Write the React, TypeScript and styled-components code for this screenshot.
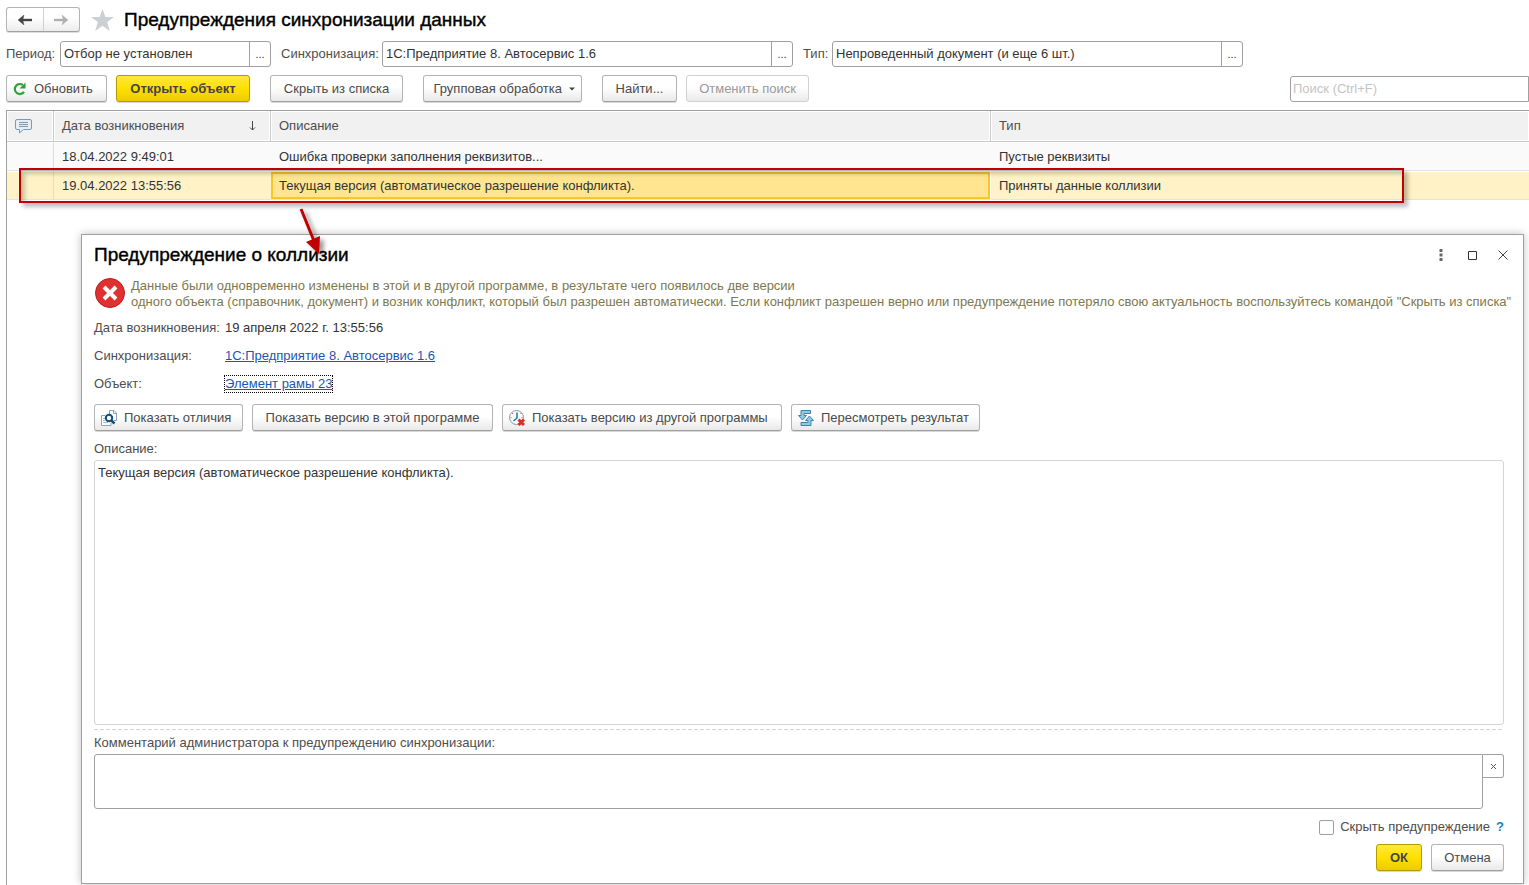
import React from "react";
import styled, { createGlobalStyle, css } from "styled-components";

const GlobalStyle = createGlobalStyle`
  *, *::before, *::after { box-sizing: border-box; }
  html, body, #root { height: 100%; }
  body {
    margin: 0;
    background: #fff;
    color: #333;
    font: 13px/16px "Liberation Sans", Arial, sans-serif;
  }
  button, input, textarea { font: inherit; color: inherit; margin: 0; }
  svg { display: block; flex-shrink: 0; }
`;

const line = "#a0a0a0";

const Page = styled.div`
  position: relative;
  display: flex;
  flex-direction: column;
  min-height: max(100%, 720px);
  padding-left: 6px;
  overflow: hidden;
`;

const Header = styled.header`
  display: flex;
  align-items: center;
  height: 39px;
`;

const NavGroup = styled.nav`
  display: flex;
  width: 74px;
  height: 25px;
  border: 1px solid #b4b4b4;
  border-bottom-color: ${line};
  border-radius: 3px;
  background: linear-gradient(#fff 40%, #ececec);
  box-shadow: 0 1px 0 #ddd;
`;

const NavButton = styled.button`
  flex: 1;
  display: grid;
  place-items: center;
  padding: 0;
  border: 0;
  background: none;
  & + & { border-left: 1px solid #d0d0d0; }
`;

const StarButton = styled.button`
  display: grid;
  padding: 0;
  margin: 0 9px 0 10px;
  border: 0;
  background: none;
`;

const Title = styled.h1`
  margin: 0;
  color: #000;
  font-size: 19px;
  line-height: 24px;
  font-weight: 400;
  white-space: nowrap;
  -webkit-text-stroke: 0.4px #000;
`;

const Filters = styled.div`
  display: flex;
  align-items: center;
  gap: 10px;
  margin-top: 2px;
`;

const FilterItem = styled.div`
  display: flex;
  align-items: center;
`;

const FilterLabel = styled.label<{ $width: number }>`
  width: ${(p) => p.$width}px;
  color: #4d4d4d;
  white-space: nowrap;
`;

const Field = styled.div<{ $width: number }>`
  display: flex;
  width: ${(p) => p.$width}px;
  height: 26px;
  border: 1px solid ${line};
  border-radius: 3px;
`;

const FieldInput = styled.input`
  flex: 1;
  min-width: 0;
  padding: 0 3px;
  border: 0;
  background: none;
  outline: 0;
`;

const FieldButton = styled.button`
  width: 21px;
  padding: 0;
  border: 0;
  border-left: 1px solid ${line};
  background: none;
  font-size: 11px;
`;

const Toolbar = styled.div`
  display: flex;
  align-items: center;
  gap: 9px;
  margin-top: 8px;
  padding-bottom: 8px;
`;

const Spacer = styled.span<{ $width?: number }>`
  ${(p) => (p.$width ? css`width: ${p.$width}px;` : css`flex: 1;`)}
`;

const Button = styled.button<{ $width: number; $primary?: boolean; $icon?: "left" | "right" }>`
  display: inline-flex;
  align-items: center;
  justify-content: ${(p) => (p.$icon === "left" ? "flex-start" : p.$icon === "right" ? "flex-end" : "center")};
  gap: 7px;
  min-width: ${(p) => p.$width}px;
  height: 27px;
  padding: 0 6px;
  border: 1px solid #b4b4b4;
  border-bottom-color: ${line};
  border-radius: 3px;
  background: linear-gradient(#fff 45%, #e9e9e9);
  box-shadow: 0 1px 0 #d8d8d8;
  color: #4a4a4a;
  white-space: nowrap;
  ${(p) =>
    p.$primary &&
    css`
      border-color: #b39b00;
      background: linear-gradient(#ffe83c, #ffe000 50%, #eccb00);
      color: #444;
      font-weight: 700;
    `}
  &:disabled {
    border-color: #d0d0d0;
    box-shadow: none;
    color: #999;
  }
`;

const Search = styled.input`
  width: 239px;
  height: 26px;
  padding: 0 2px;
  border: 1px solid ${line};
  border-radius: 3px 0 0 3px;
  outline: 0;
  &::placeholder { color: #c4c4c4; opacity: 1; }
`;

const ListPanel = styled.main`
  position: relative;
  flex: 1;
  border: solid ${line};
  border-width: 1px 0 0 1px;
`;

const Table = styled.table`
  width: 100%;
  table-layout: fixed;
  border-collapse: separate;
  border-spacing: 0;
  text-align: left;
`;

const Col = styled.col<{ $width: number }>`
  width: ${(p) => p.$width}px;
`;

const HeadCell = styled.th`
  height: 31px;
  padding: 0 8px;
  border-right: 1px solid #c8c8c8;
  border-bottom: 1px solid #c8c8c8;
  background: #f1f1f1;
  box-shadow: inset 0 0 0 1px #fff;
  color: #4d4d4d;
  font-weight: 400;
  &:last-child { border-right: 0; }
`;

const HeadContent = styled.span`
  display: flex;
  align-items: center;
  justify-content: space-between;
  padding-right: 6px;
`;

const Row = styled.tr<{ $selected?: boolean }>`
  background: ${(p) => (p.$selected ? "#fff2c6" : "#fafafa")};
`;

const Cell = styled.td<{ $current?: boolean }>`
  height: 29px;
  padding: 1px 8px 0;
  border-top: 1px solid #fff;
  border-bottom: 1px solid #e4e4e4;
  white-space: nowrap;
  &:first-child { border-right: 1px solid #dcdcdc; }
  ${(p) =>
    p.$current &&
    css`
      background: #ffe58f;
      box-shadow: inset 0 0 0 2px #f9c623;
      border-right: 1px solid #fff;
    `}
`;

const Highlight = styled.div`
  position: absolute;
  top: 57px;
  left: 12px;
  width: 1385px;
  height: 35px;
  border: 2px solid #c00000;
  box-shadow: 4px 4px 4px rgba(0, 0, 0, 0.25), inset 4px 4px 4px rgba(0, 0, 0, 0.2);
  pointer-events: none;
`;

const Arrow = styled.svg`
  position: absolute;
  z-index: 2;
  top: 93px;
  left: 287px;
  pointer-events: none;
  filter: drop-shadow(4px 3px 2px rgba(0, 0, 0, 0.4));
`;

const Dialog = styled.section`
  position: absolute;
  top: 123px;
  right: 5px;
  bottom: 1px;
  left: 74px;
  display: flex;
  flex-direction: column;
  padding: 7px 19px 12px 12px;
  border: 1px solid ${line};
  background: #fff;
  box-shadow: 0 0 8px rgba(0, 0, 0, 0.25);
`;

const DialogHeader = styled.header`
  display: flex;
  align-items: center;
  justify-content: space-between;
  height: 26px;
`;

const WindowControls = styled.div`
  display: flex;
  gap: 15px;
  margin-right: -7px;
`;

const WindowButton = styled.button`
  display: grid;
  place-items: center;
  width: 16px;
  height: 16px;
  padding: 0;
  border: 0;
  background: none;
`;

const Message = styled.div`
  display: flex;
  align-items: center;
  gap: 5px;
  margin-top: 10px;
  color: #7d7850;
  white-space: nowrap;
`;

const MessageText = styled.p`
  margin: 0;
`;

const Details = styled.dl`
  display: grid;
  grid-template-columns: 131px 1fr;
  grid-auto-rows: 28px;
  align-items: center;
  margin: 4px 0 6px;
  white-space: nowrap;
`;

const Term = styled.dt`
  color: #4d4d4d;
`;

const Value = styled.dd`
  margin: 0;
`;

const Link = styled.a<{ $focused?: boolean }>`
  display: inline-block;
  color: #1a56b4;
  text-decoration: underline;
  ${(p) => p.$focused && css`outline: 1px dotted #000;`}
`;

const Actions = styled.div`
  display: flex;
  gap: 9px;
`;

const AreaLabel = styled.label`
  display: block;
  color: #4d4d4d;
  margin: 10px 0 3px;
`;

const Description = styled.textarea`
  flex: 1;
  min-height: 60px;
  padding: 4px 3px;
  border: 1px solid #d4d4d4;
  border-radius: 3px;
  outline: 0;
  resize: none;
`;

const Divider = styled.hr`
  width: 100%;
  height: 1px;
  margin: 4px 0 0;
  border: 0;
  background: repeating-linear-gradient(90deg, #d4d4d4 0 4px, transparent 4px 6px);
`;

const CommentLabel = styled(AreaLabel)`
  margin: 5px 0 3px;
`;

const CommentRow = styled.div`
  display: flex;
  align-items: flex-start;
`;

const Comment = styled.textarea`
  flex: 1;
  height: 55px;
  padding: 4px 3px;
  border: 1px solid ${line};
  border-radius: 3px 0 3px 3px;
  outline: 0;
  resize: none;
`;

const ClearButton = styled.button`
  display: grid;
  place-items: center;
  width: 21px;
  height: 24px;
  padding: 0;
  border: 1px solid ${line};
  border-left: 0;
  border-radius: 0 3px 3px 0;
  background: none;
`;

const HideRow = styled.div`
  display: flex;
  align-items: center;
  justify-content: flex-end;
  gap: 6px;
  height: 16px;
  margin-top: 10px;
`;

const CheckLabel = styled.label`
  display: flex;
  align-items: center;
  gap: 6px;
  color: #4d4d4d;
`;

const Checkbox = styled.input`
  appearance: none;
  width: 15px;
  height: 15px;
  border: 1px solid ${line};
  border-radius: 2px;
`;

const Help = styled.button`
  padding: 0;
  border: 0;
  background: none;
  color: #1583c8;
  font-weight: 700;
`;

const Footer = styled.footer`
  display: flex;
  justify-content: flex-end;
  gap: 9px;
  margin-top: 9px;
`;

const NavArrow = ({ color, flip }: { color: string; flip?: boolean }) => (
  <svg width="14" height="10" viewBox="0 0 14 10" aria-hidden="true">
    <path
      d="M0 5 6 0 5 4H14V6H5L6 10Z"
      fill={color}
      stroke={color}
      strokeWidth="0.4"
      transform={flip ? "rotate(180 7 5)" : undefined}
    />
  </svg>
);

const StarIcon = () => (
  <svg width="25" height="22" viewBox="0 0 25 22" aria-hidden="true">
    <path d="M12.5 0 15.4 8H24l-6.8 5.1L19.8 22 12.5 16.7 5.2 22 7.8 13.1 1 8h8.6Z" fill="#cdd0d3" />
  </svg>
);

const RefreshIcon = () => (
  <svg width="14" height="14" viewBox="0 0 14 14" aria-hidden="true">
    <path d="M9.8 3A5 5 0 1 0 11 9.8" fill="none" stroke="#2fa03a" strokeWidth="2.2" />
    <path d="M12.500 0.500V6.500H6.500Z" fill="#2fa03a" />
  </svg>
);

const CommentIcon = () => (
  <svg width="17" height="15" viewBox="0 0 17 15" aria-hidden="true">
    <path
      d="M2 .5H15Q16.5 .5 16.5 2V9Q16.5 10.5 15 10.5H8.5L4.5 14V10.5H2Q.5 10.5 .5 9V2Q.5 .5 2 .5Z"
      fill="#e6eef5"
      stroke="#7b9ab5"
    />
    <path d="M4 3.5h9M4 5.5h9M4 7.5h9" stroke="#8297a8" />
  </svg>
);

const SortIcon = () => (
  <svg width="7" height="10" viewBox="0 0 7 10" aria-hidden="true">
    <path d="M3.5 0V9M1 6.5 3.5 9 6 6.5" fill="none" stroke="#444" />
  </svg>
);

const ErrorIcon = () => (
  <svg width="32" height="32" viewBox="0 0 32 32" aria-hidden="true">
    <circle cx="16" cy="15" r="14.5" fill="#e03030" stroke="#b51f22" />
    <path d="m10 9 12 12m0-12-12 12" stroke="#fff" strokeWidth="4" />
  </svg>
);

const CompareIcon = () => (
  <svg width="16" height="16" viewBox="0 0 16 16" aria-hidden="true">
    <path d="M8.5 4V.5h4.5l2.5 2.5V10.5H13" fill="#fff" stroke="#8ea3b5" />
    <path d="M12.5 .5V3.5H15.5" fill="none" stroke="#8ea3b5" />
    <path d="M4 5.5H.5V15.5H10V13" fill="#fff" stroke="#8ea3b5" />
    <path d="M2 8.5h2M2 10.5h2M2 12.5h5" stroke="#a9bac8" />
    <circle cx="8" cy="8" r="3.2" fill="#fff" stroke="#0d4f80" strokeWidth="2" />
    <path d="m10.3 10.3 3.2 3.2" stroke="#0d4f80" strokeWidth="2.5" />
  </svg>
);

const ClockIcon = () => (
  <svg width="16" height="16" viewBox="0 0 16 16" aria-hidden="true">
    <circle cx="7.5" cy="7.5" r="7" fill="#f7fafc" stroke="#8798a6" />
    <path d="M8 2.5V8L4.5 11" fill="none" stroke="#2673b0" strokeWidth="1.5" />
    <path d="M1.500 7.500h1M12.500 7.500h1M3 3.500h1M11.500 3.500h1" stroke="#e05050" />
    <path d="m9.500 9.500 5.500 5.500m0-5.500-5.500 5.500" stroke="#dd2c2c" strokeWidth="3" />
  </svg>
);

const ReviewIcon = () => (
  <svg width="16" height="16" viewBox="0 0 16 16" aria-hidden="true">
    <g fill="#8ccaea" stroke="#4381a5">
      <path d="M12.500 .5H3V5.500H.5L4.500 10 8.500 5.500H6V3.500H12.500Z" />
      <path d="M3 15.500H13V10.500H15.500L11.500 6 7.500 10.500H10V12.500H3Z" />
    </g>
  </svg>
);

const CaretIcon = () => (
  <svg width="6" height="4" viewBox="0 0 6 4" aria-hidden="true">
    <path d="M0 .5H6L3 3.500Z" fill="#444" />
  </svg>
);

const filters = [
  { id: "period", label: "Период:", labelWidth: 54, width: 211, value: "Отбор не установлен" },
  { id: "sync", label: "Синхронизация:", labelWidth: 101, width: 411, value: "1С:Предприятие 8. Автосервис 1.6" },
  { id: "type", label: "Тип:", labelWidth: 29, width: 411, value: "Непроведенный документ (и еще 6 шт.)" },
];

const rows = [
  { date: "18.04.2022 9:49:01", text: "Ошибка проверки заполнения реквизитов...", type: "Пустые реквизиты" },
  {
    date: "19.04.2022 13:55:56",
    text: "Текущая версия (автоматическое разрешение конфликта).",
    type: "Приняты данные коллизии",
    selected: true,
  },
];

export default function App() {
  return (
    <Page>
      <GlobalStyle />
      <Header>
        <NavGroup>
          <NavButton aria-label="Назад"><NavArrow color="#444" /></NavButton>
          <NavButton aria-label="Вперед"><NavArrow color="#b0b0b0" flip /></NavButton>
        </NavGroup>
        <StarButton aria-label="Избранное"><StarIcon /></StarButton>
        <Title>Предупреждения синхронизации данных</Title>
      </Header>

      <Filters>
        {filters.map((f) => (
          <FilterItem key={f.id}>
            <FilterLabel htmlFor={f.id} $width={f.labelWidth}>{f.label}</FilterLabel>
            <Field $width={f.width}>
              <FieldInput id={f.id} defaultValue={f.value} />
              <FieldButton aria-label="Выбрать">...</FieldButton>
            </Field>
          </FilterItem>
        ))}
      </Filters>

      <Toolbar>
        <Button $width={101} $icon="left"><RefreshIcon />Обновить</Button>
        <Button $width={134} $primary>Открыть объект</Button>
        <Spacer $width={2} />
        <Button $width={133}>Скрыть из списка</Button>
        <Spacer $width={2} />
        <Button $width={159} $icon="right">Групповая обработка<CaretIcon /></Button>
        <Spacer $width={2} />
        <Button $width={75}>Найти...</Button>
        <Button $width={123} disabled>Отменить поиск</Button>
        <Spacer />
        <Search aria-label="Поиск" placeholder="Поиск (Ctrl+F)" />
      </Toolbar>

      <ListPanel>
        <Table>
          <colgroup>
            <Col $width={47} />
            <Col $width={217} />
            <Col $width={720} />
            <col />
          </colgroup>
          <thead>
            <tr>
              <HeadCell aria-label="Комментарий"><CommentIcon /></HeadCell>
              <HeadCell><HeadContent>Дата возникновения<SortIcon /></HeadContent></HeadCell>
              <HeadCell>Описание</HeadCell>
              <HeadCell>Тип</HeadCell>
            </tr>
          </thead>
          <tbody>
            {rows.map((r) => (
              <Row key={r.date} $selected={r.selected}>
                <Cell />
                <Cell>{r.date}</Cell>
                <Cell $current={r.selected}>{r.text}</Cell>
                <Cell>{r.type}</Cell>
              </Row>
            ))}
          </tbody>
        </Table>
        <Highlight />

        <Dialog role="dialog" aria-labelledby="dialog-title">
          <DialogHeader>
            <Title as="h2" id="dialog-title">Предупреждение о коллизии</Title>
            <WindowControls>
              <WindowButton aria-label="Меню">
                <svg width="4" height="12" viewBox="0 0 4 12"><path d="M.5 0h3v3h-3zM.5 4.500h3v3h-3zM.5 9h3v3h-3z" fill="#666" /></svg>
              </WindowButton>
              <WindowButton aria-label="Развернуть">
                <svg width="9" height="9" viewBox="0 0 9 9"><path d="M.5 .5h8v8h-8z" fill="none" stroke="#333" /></svg>
              </WindowButton>
              <WindowButton aria-label="Закрыть">
                <svg width="10" height="10" viewBox="0 0 10 10"><path d="m.5 .5 9 9m0-9-9 9" stroke="#444" /></svg>
              </WindowButton>
            </WindowControls>
          </DialogHeader>

          <Message>
            <ErrorIcon />
            <MessageText>
              Данные были одновременно изменены в этой и в другой программе, в результате чего появилось две версии
              <br />
              одного объекта (справочник, документ) и возник конфликт, который был разрешен автоматически. Если конфликт
              разрешен верно или предупреждение потеряло свою актуальность воспользуйтесь командой "Скрыть из списка"
            </MessageText>
          </Message>

          <Details>
            <Term>Дата возникновения:</Term>
            <Value>19 апреля 2022 г. 13:55:56</Value>
            <Term>Синхронизация:</Term>
            <Value><Link href="#sync">1С:Предприятие 8. Автосервис 1.6</Link></Value>
            <Term>Объект:</Term>
            <Value><Link href="#object" $focused>Элемент рамы 23</Link></Value>
          </Details>

          <Actions>
            <Button $width={149} $icon="left"><CompareIcon />Показать отличия</Button>
            <Button $width={241}>Показать версию в этой программе</Button>
            <Button $width={280} $icon="left"><ClockIcon />Показать версию из другой программы</Button>
            <Button $width={189} $icon="left"><ReviewIcon />Пересмотреть результат</Button>
          </Actions>

          <AreaLabel htmlFor="description">Описание:</AreaLabel>
          <Description id="description" readOnly value="Текущая версия (автоматическое разрешение конфликта)." />
          <Divider />
          <CommentLabel htmlFor="comment">Комментарий администратора к предупреждению синхронизации:</CommentLabel>
          <CommentRow>
            <Comment id="comment" />
            <ClearButton aria-label="Очистить">
              <svg width="7" height="7" viewBox="0 0 7 7"><path d="m1 1 5 5m0-5-5 5" stroke="#555" /></svg>
            </ClearButton>
          </CommentRow>
          <HideRow>
            <CheckLabel>
              <Checkbox type="checkbox" />
              Скрыть предупреждение
            </CheckLabel>
            <Help aria-label="Справка">?</Help>
          </HideRow>
          <Footer>
            <Button $width={46} $primary>ОК</Button>
            <Button $width={73}>Отмена</Button>
          </Footer>
        </Dialog>

        <Arrow width="32" height="54" viewBox="0 0 32 54" aria-hidden="true">
          <path d="M7 5 20 37" stroke="#c00000" strokeWidth="3" />
          <path d="M12 38 26 32 25 50Z" fill="#c00000" />
        </Arrow>
      </ListPanel>
    </Page>
  );
}
